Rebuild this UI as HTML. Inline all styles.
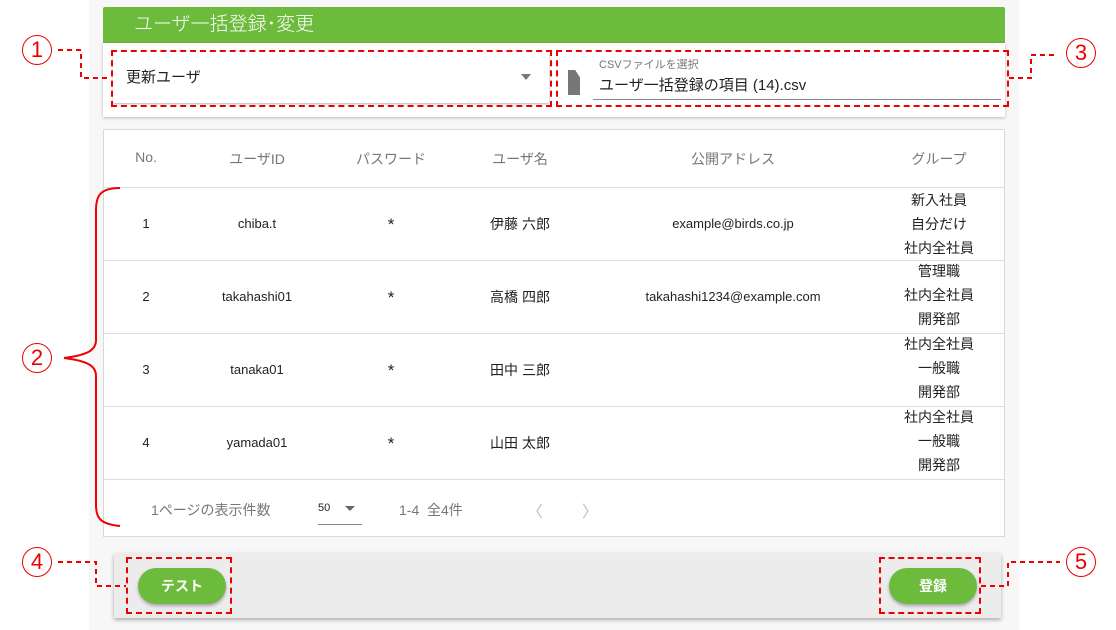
<!DOCTYPE html>
<html><head><meta charset="utf-8"><style>
*{box-sizing:border-box;margin:0;padding:0}
body{width:1116px;height:630px;background:#fff;font-family:"Liberation Sans","Noto Sans CJK JP",sans-serif;position:relative;overflow:hidden;color:#222}
.a{position:absolute}
.bg{left:89px;top:0;width:930px;height:630px;background:#f7f7f7}
.hdr{left:103px;top:7px;width:902px;height:36px;background:#6dbb3c;color:#fff;font-size:19px;line-height:36px;padding-left:31px;border-radius:2px 2px 0 0;font-weight:300}
.top{left:103px;top:43px;width:902px;height:74px;background:#fff;box-shadow:0 1px 3px rgba(0,0,0,.25)}
.sel{left:113px;top:52px;width:436px;height:51px;background:#fff;box-shadow:0 1px 2px rgba(0,0,0,.3);font-size:15px;line-height:51px;padding-left:13px;border-radius:2px}
.tbl{left:103px;top:129px;width:902px;height:408px;background:#fff;border:1px solid #d8d8d8}
.row{left:0;width:900px;border-top:1px solid #ddd;height:73px}
.c{position:absolute;text-align:center;transform:translateX(-50%);white-space:nowrap;font-size:13px}
.h{color:#777;font-size:14px;top:19px}
.bar{left:114px;top:553px;width:887px;height:65px;background:#ececec;box-shadow:0 2px 4px rgba(0,0,0,.3)}
.btn{background:#6dbb3c;color:#fff;font-weight:bold;font-size:14px;text-align:center;line-height:36px;border-radius:18px;height:36px;box-shadow:0 2px 3px rgba(0,0,0,.3)}
.num{color:#e00;font-size:22px;width:30px;height:30px;border:1.5px solid #e00;border-radius:50%;text-align:center;line-height:27px;font-weight:300}
.d{border:2px dashed #e00}
.pw{font-size:17px}
</style></head><body>
<div class="a bg"></div>
<div class="a hdr">ユーザ一括登録･変更</div>
<div class="a top"></div>
<div class="a sel">更新ユーザ<span style="position:absolute;right:18px;top:22px;border:5px solid transparent;border-top:6px solid #777"></span></div>
<div class="a" style="left:568px;top:70px;width:12px;height:25px;background:#777;clip-path:polygon(0 0,60% 0,100% 30%,100% 100%,0 100%)"></div>
<div class="a" style="left:599px;top:56px;font-size:11px;color:#777">CSVファイルを選択</div>
<div class="a" style="left:599px;top:74px;font-size:15px">ユーザ一括登録の項目 (14).csv</div>
<div class="a" style="left:593px;top:99px;width:408px;height:1px;background:#888"></div>

<div class="a tbl">
<div class="c h" style="left:42px">No.</div>
<div class="c h" style="left:153px">ユーザID</div>
<div class="c h" style="left:287px">パスワード</div>
<div class="c h" style="left:416px">ユーザ名</div>
<div class="c h" style="left:629px">公開アドレス</div>
<div class="c h" style="left:835px">グループ</div>

<div class="a row" style="top:57px">
<div class="c" style="left:42px;top:28px">1</div><div class="c" style="left:153px;top:28px">chiba.t</div><div class="c pw" style="left:287px;top:27px">*</div><div class="c" style="left:416px;top:26px;font-size:14px">伊藤 六郎</div><div class="c" style="left:629px;top:28px">example@birds.co.jp</div><div class="c" style="left:835px;top:0px;line-height:24px;font-size:14px">新入社員<br>自分だけ<br>社内全社員</div></div>
<div class="a row" style="top:130px">
<div class="c" style="left:42px;top:28px">2</div><div class="c" style="left:153px;top:28px">takahashi01</div><div class="c pw" style="left:287px;top:27px">*</div><div class="c" style="left:416px;top:26px;font-size:14px">高橋 四郎</div><div class="c" style="left:629px;top:28px">takahashi1234@example.com</div><div class="c" style="left:835px;top:-2px;line-height:24px;font-size:14px">管理職<br>社内全社員<br>開発部</div></div>
<div class="a row" style="top:203px">
<div class="c" style="left:42px;top:28px">3</div><div class="c" style="left:153px;top:28px">tanaka01</div><div class="c pw" style="left:287px;top:27px">*</div><div class="c" style="left:416px;top:26px;font-size:14px">田中 三郎</div><div class="c" style="left:835px;top:-2px;line-height:24px;font-size:14px">社内全社員<br>一般職<br>開発部</div></div>
<div class="a row" style="top:276px">
<div class="c" style="left:42px;top:28px">4</div><div class="c" style="left:153px;top:28px">yamada01</div><div class="c pw" style="left:287px;top:27px">*</div><div class="c" style="left:416px;top:26px;font-size:14px">山田 太郎</div><div class="c" style="left:835px;top:-2px;line-height:24px;font-size:14px">社内全社員<br>一般職<br>開発部</div></div>
<div class="a row" style="top:349px;height:58px">
<div class="a" style="left:47px;top:20px;font-size:14px;color:#777">1ページの表示件数</div>
<div class="a" style="left:214px;top:22px;font-size:11px">50</div>
<div class="a" style="left:241px;top:26px;border:5px solid transparent;border-top:5px solid #666"></div>
<div class="a" style="left:214px;top:44px;width:44px;height:1px;background:#888"></div>
<div class="a" style="left:295px;top:20px;font-size:14px;color:#777">1-4 &nbsp;全4件</div>
<div class="a" style="left:423px;top:18px;font-size:16px;color:#bbb">〈</div>
<div class="a" style="left:478px;top:18px;font-size:16px;color:#bbb">〉</div>
</div>
</div>

<div class="a bar"></div>
<div class="a btn" style="left:138px;top:568px;width:88px">テスト</div>
<div class="a btn" style="left:889px;top:568px;width:88px">登録</div>

<!-- annotations -->
<div class="a d" style="left:111px;top:50px;width:441px;height:57px"></div>
<div class="a d" style="left:556px;top:50px;width:453px;height:57px"></div>
<div class="a d" style="left:126px;top:557px;width:106px;height:57px"></div>
<div class="a d" style="left:879px;top:557px;width:102px;height:57px"></div>
<div class="a num" style="left:22px;top:35px">1</div>
<div class="a num" style="left:22px;top:343px">2</div>
<div class="a num" style="left:1066px;top:38px">3</div>
<div class="a num" style="left:22px;top:547px">4</div>
<div class="a num" style="left:1066px;top:547px">5</div>
<svg class="a" style="left:0;top:0" width="1116" height="630">
<g fill="none" stroke="#e00" stroke-width="2" stroke-dasharray="5,4">
<path d="M58 50H81V78H111"/>
<path d="M1009 78H1031V55H1058"/>
<path d="M58 562H96V586H126"/>
<path d="M981 586H1008V562H1060"/>
</g>
<path d="M120 188C100 188 96 196 96 210V340C96 350 88 355 64 358C88 361 96 366 96 376V505C96 518 100 524 120 526" fill="none" stroke="#e00" stroke-width="2"/>
</svg>
</body></html>
